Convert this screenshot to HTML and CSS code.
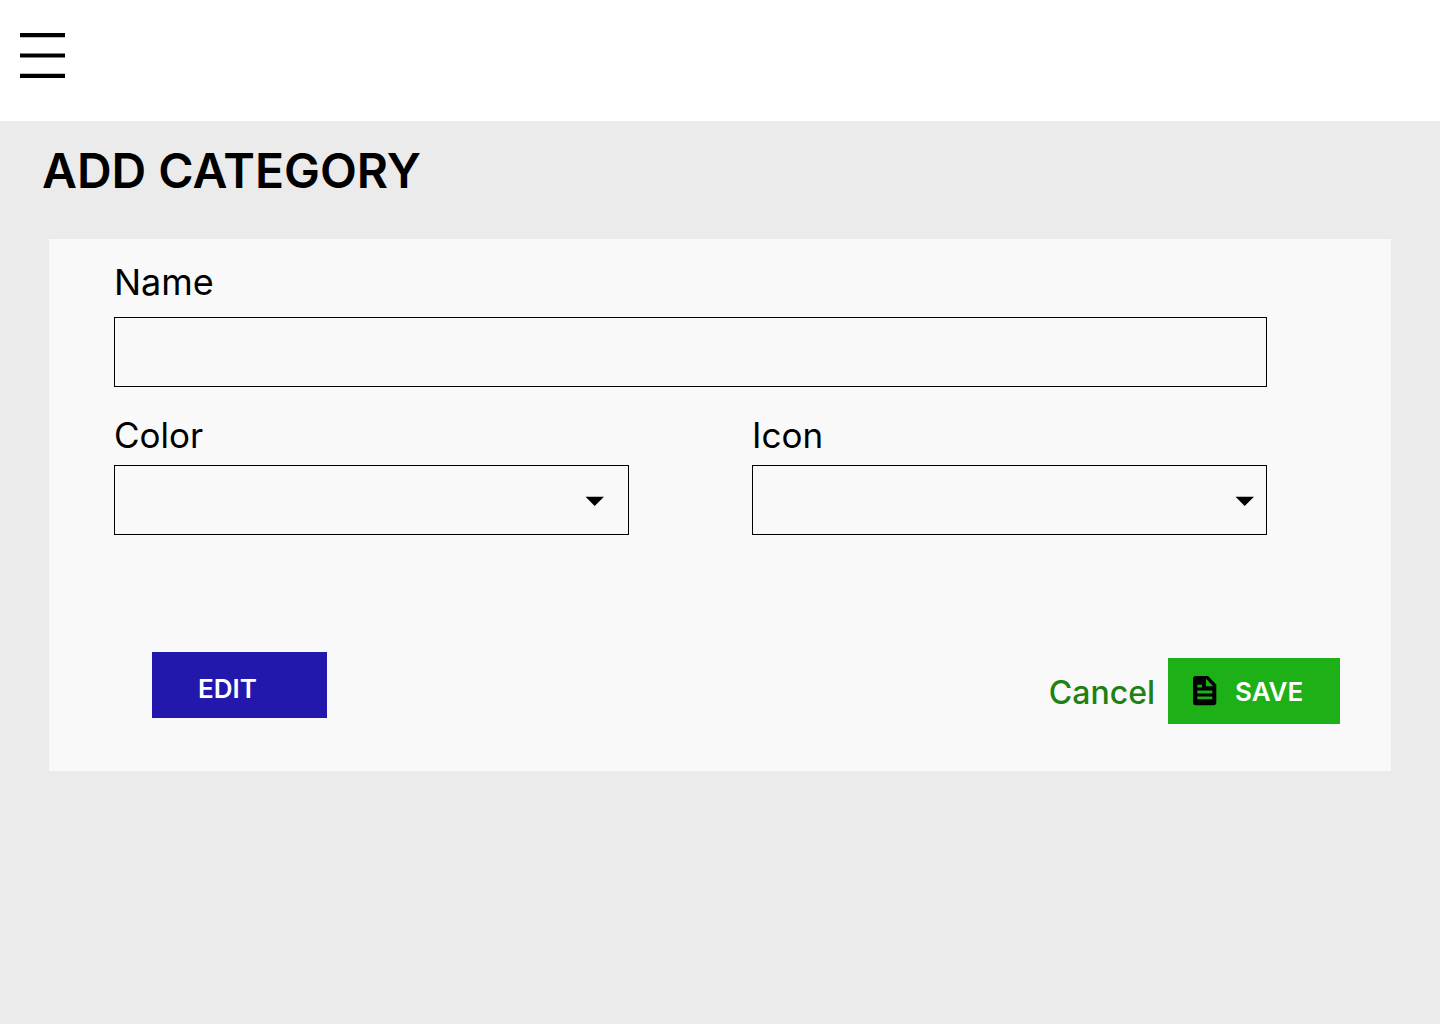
FILE: index.html
```html
<!DOCTYPE html>
<html lang="en">
<head>
<meta charset="utf-8">
<meta name="viewport" content="width=device-width, initial-scale=1">
<title>Add category</title>
<link rel="stylesheet" href="styles.css">
</head>
<body>
<header class="topbar">
  <button class="menu" type="button" aria-label="Menu">
    <svg width="45" height="45" viewBox="0 0 45 45" aria-hidden="true"><path d="M0 2.100h45M0 22.500h45M0 42.900h45" stroke="#000" stroke-width="4.200"/></svg>
  </button>
</header>
<main class="page">
  <h1 class="title">ADD CATEGORY</h1>
  <form class="card">
    <div class="fields">
      <div class="field field-wide">
        <label class="label label-name" for="name">Name</label>
        <input class="control" id="name" type="text">
      </div>
      <div class="field">
        <label class="label" for="color">Color</label>
        <div class="select">
          <select class="control" id="color"><option></option></select>
          <svg class="arrow" width="20" height="10" viewBox="0 0 20 10" aria-hidden="true"><path d="M.5.700h18.500L9.700 10z"/></svg>
        </div>
      </div>
      <div class="field">
        <label class="label" for="icon">Icon</label>
        <div class="select">
          <select class="control" id="icon"><option></option></select>
          <svg class="arrow arrow-near" width="20" height="10" viewBox="0 0 20 10" aria-hidden="true"><path d="M.5.700h18.500L9.700 10z"/></svg>
        </div>
      </div>
    </div>
    <div class="actions">
      <button class="button edit" type="button">EDIT</button>
      <div class="confirm">
        <a class="cancel" href="#">Cancel</a>
        <button class="button save" type="submit">
          <svg width="24" height="30" viewBox="0 0 24 30" aria-hidden="true"><path fill-rule="evenodd" d="M2.700 0h12.300l8.300 8.600v17.900a2.700 2.700 0 0 1-2.700 2.700H2.700a2.700 2.700 0 0 1-2.700-2.700V2.700a2.700 2.700 0 0 1 2.700-2.700zM13 2.800v7.400h7.200zM4.300 8.800v2.700h4.700V8.800zM4.300 14.600v2.800h15v-2.800zM4.300 20.400v2.800h15v-2.800z"/></svg>
          SAVE
        </button>
      </div>
    </div>
  </form>
</main>
</body>
</html>
```
FILE: styles.css
```css
* { box-sizing: border-box; }

body {
  margin: 0;
  min-height: 100vh;
  background: #ebebeb;
  color: #000;
  font-family: Inter, sans-serif;
}

.topbar {
  padding: 33px 20px 43px;
  background: #fff;
}

.menu {
  display: block;
  padding: 0;
  border: 0;
  background: none;
}

.menu svg { display: block; }

.page { padding: 20px 49px; }

.title {
  margin: 0 -7px 38px;
  font-size: 48px;
  line-height: 60px;
  font-weight: 600;
}

.card {
  padding: 21px 51px 47px 65px;
  background: #f9f9f9;
}

.fields {
  display: grid;
  grid-template-columns: 1fr 1fr;
  gap: 26px 123px;
  margin-right: 73px;
}

.field-wide { grid-column: 1 / -1; }

.label {
  display: block;
  margin-bottom: 8px;
  font-size: 35px;
  line-height: 44px;
}

.label-name {
  margin-bottom: 13px;
  font-size: 36px;
}

.control {
  display: block;
  width: 100%;
  height: 70px;
  padding: 0 20px;
  border: 1px solid #000;
  border-radius: 0;
  background: transparent;
  font: inherit;
  font-size: 32px;
  appearance: none;
}

.select { position: relative; }

.arrow {
  position: absolute;
  top: 31px;
  right: 24px;
  pointer-events: none;
}

.arrow-near { right: 12px; }

.actions {
  display: flex;
  justify-content: space-between;
  align-items: flex-start;
  margin-top: 117px;
  padding-left: 38px;
}

.button {
  height: 66px;
  border: 0;
  color: #fff;
  font: 600 26px/32px Inter, sans-serif;
}

.edit {
  width: 175px;
  padding: 8px 46px 0;
  background: #2318ac;
  text-align: left;
}

.confirm {
  display: flex;
  align-items: center;
  gap: 13px;
  padding-top: 6px;
}

.cancel {
  padding-top: 4px;
  color: #1f8013;
  font-size: 32px;
  line-height: 40px;
  font-weight: 500;
  text-decoration: none;
}

.save {
  display: flex;
  align-items: center;
  gap: 18px;
  width: 172px;
  padding: 2px 0 0 25px;
  background: #1db017;
}

.save svg { margin-bottom: 2px; }
```
